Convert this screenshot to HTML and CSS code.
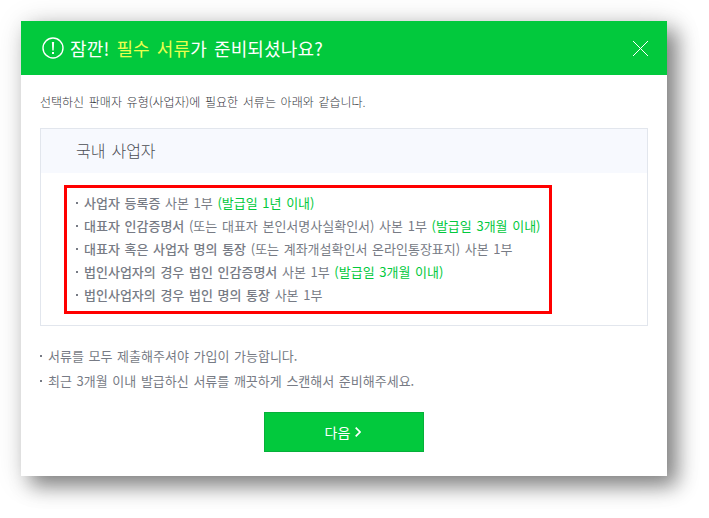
FILE: index.html
```html
<!DOCTYPE html>
<html lang="ko">
<head>
    <meta charset="UTF-8">
    <meta name="viewport" content="width=device-width, initial-scale=1.0">
    <title>필수 서류 안내</title>
    <link rel="stylesheet" href="styles.css">
</head>
<body>
    <div class="modal">
        <div class="modal-header">
            <svg class="icon-notice" width="22" height="22" viewBox="0 0 22 22">
                <circle cx="11" cy="11" r="10" fill="none" stroke="#fff" stroke-width="1.4"/>
                <path d="M9.9 5h2.2l-.4 8.5h-1.4z" fill="#fff"/>
                <rect x="10" y="15" width="2" height="2" fill="#fff"/>
            </svg>
            <h1>잠깐! <em>필수 서류</em>가 준비되셨나요?</h1>
            <button class="close-button" aria-label="닫기">
                <svg width="15" height="15" viewBox="0 0 15 15">
                    <path d="M0 0l15 15M15 0L0 15" stroke="#fff" stroke-width="1"/>
                </svg>
            </button>
        </div>

        <div class="modal-body">
            <p class="intro">선택하신 판매자 유형(사업자)에 필요한 서류는 아래와 같습니다.</p>

            <div class="card">
                <h2>국내 사업자</h2>
                <ul class="doc-list">
                    <li><strong>사업자 등록증</strong> 사본 1부 <span class="term">(발급일 1년 이내)</span></li>
                    <li><strong>대표자 인감증명서</strong> (또는 대표자 본인서명사실확인서) 사본 1부 <span class="term">(발급일 3개월 이내)</span></li>
                    <li><strong>대표자 혹은 사업자 명의 통장</strong> (또는 계좌개설확인서 온라인통장표지) 사본 1부</li>
                    <li><strong>법인사업자의 경우 법인 인감증명서</strong> 사본 1부 <span class="term">(발급일 3개월 이내)</span></li>
                    <li><strong>법인사업자의 경우 법인 명의 통장</strong> 사본 1부</li>
                </ul>
            </div>

            <ul class="note-list">
                <li>서류를 모두 제출해주셔야 가입이 가능합니다.</li>
                <li>최근 3개월 이내 발급하신 서류를 깨끗하게 스캔해서 준비해주세요.</li>
            </ul>

            <button class="next-button">
                <span>다음</span>
                <svg width="6" height="10" viewBox="0 0 6 10">
                    <path d="M.7.7L5 5 .7 9.3" fill="none" stroke="#fff" stroke-width="1.7"/>
                </svg>
            </button>
        </div>
    </div>
</body>
</html>
```

FILE: styles.css
```css
:root {
    --green: #02c93d;
    --green-border: #06b03a;
    --text-dark: #4b4d54;
    --text: #777b85;
    --border-color: #e2e6ed;
}

* {
    margin: 0;
    padding: 0;
    box-sizing: border-box;
}

body {
    min-height: 100vh;
    padding: 21px;
    background-color: #fff;
    color: var(--text);
    font-family: "Noto Sans CJK KR", sans-serif;
    font-size: 13px;
}

.modal {
    width: 646px;
    height: 455px;
    background-color: #fff;
    box-shadow: 10px 10px 19px rgba(0, 0, 0, 0.42), 4px 4px 28px rgba(0, 0, 0, 0.18);
}

/* Header */
.modal-header {
    display: flex;
    align-items: center;
    height: 54px;
    padding: 0 19px 0 21px;
    background-color: var(--green);
    color: #fff;
}

.icon-notice {
    margin-right: 6px;
}

h1 {
    font-size: 18px;
    font-weight: 400;
    line-height: 26px;
    letter-spacing: 0.15px;
    word-spacing: 1.8px;
    white-space: nowrap;
}

h1 em {
    color: #eaff4d;
    font-style: normal;
}

button {
    border: none;
    background: none;
    font-family: inherit;
    cursor: pointer;
}

.close-button {
    display: flex;
    margin-left: auto;
}

/* Body */
.modal-body {
    padding: 17px 19px 0;
}

.intro {
    color: #34363c;
    font-size: 12px;
    font-weight: 300;
    line-height: 20px;
    word-spacing: 1.3px;
    white-space: nowrap;
}

.card {
    height: 198px;
    margin-top: 16px;
    border: 1px solid var(--border-color);
}

h2 {
    height: 44px;
    padding-left: 35px;
    background-color: #f7f9fe;
    color: var(--text-dark);
    font-size: 16px;
    font-weight: 300;
    line-height: 43px;
    word-spacing: 1.5px;
}

ul {
    list-style: none;
    word-spacing: 1px;
    white-space: nowrap;
}

li {
    display: flex;
    align-items: center;
    white-space: pre;
}

li::before {
    content: "";
    width: 2px;
    height: 2px;
    margin-right: 6px;
    background-color: var(--text);
}

.doc-list {
    width: 488px;
    height: 129px;
    margin: 12px 0 0 23px;
    padding: 3px 0 0 9px;
    border: 3px solid #f00;
}

.doc-list li {
    height: 23px;
}

.doc-list strong {
    font-weight: 500;
}

.term {
    color: var(--green);
}

.note-list {
    margin-top: 17px;
}

.note-list li {
    height: 25px;
}

.next-button {
    display: flex;
    justify-content: center;
    align-items: center;
    gap: 5px;
    width: 160px;
    height: 40px;
    margin: 19px auto 0;
    padding-right: 2px;
    border: 1px solid var(--green-border);
    background-color: var(--green);
    color: #fff;
    font-size: 14px;
    line-height: 20px;
}
```
